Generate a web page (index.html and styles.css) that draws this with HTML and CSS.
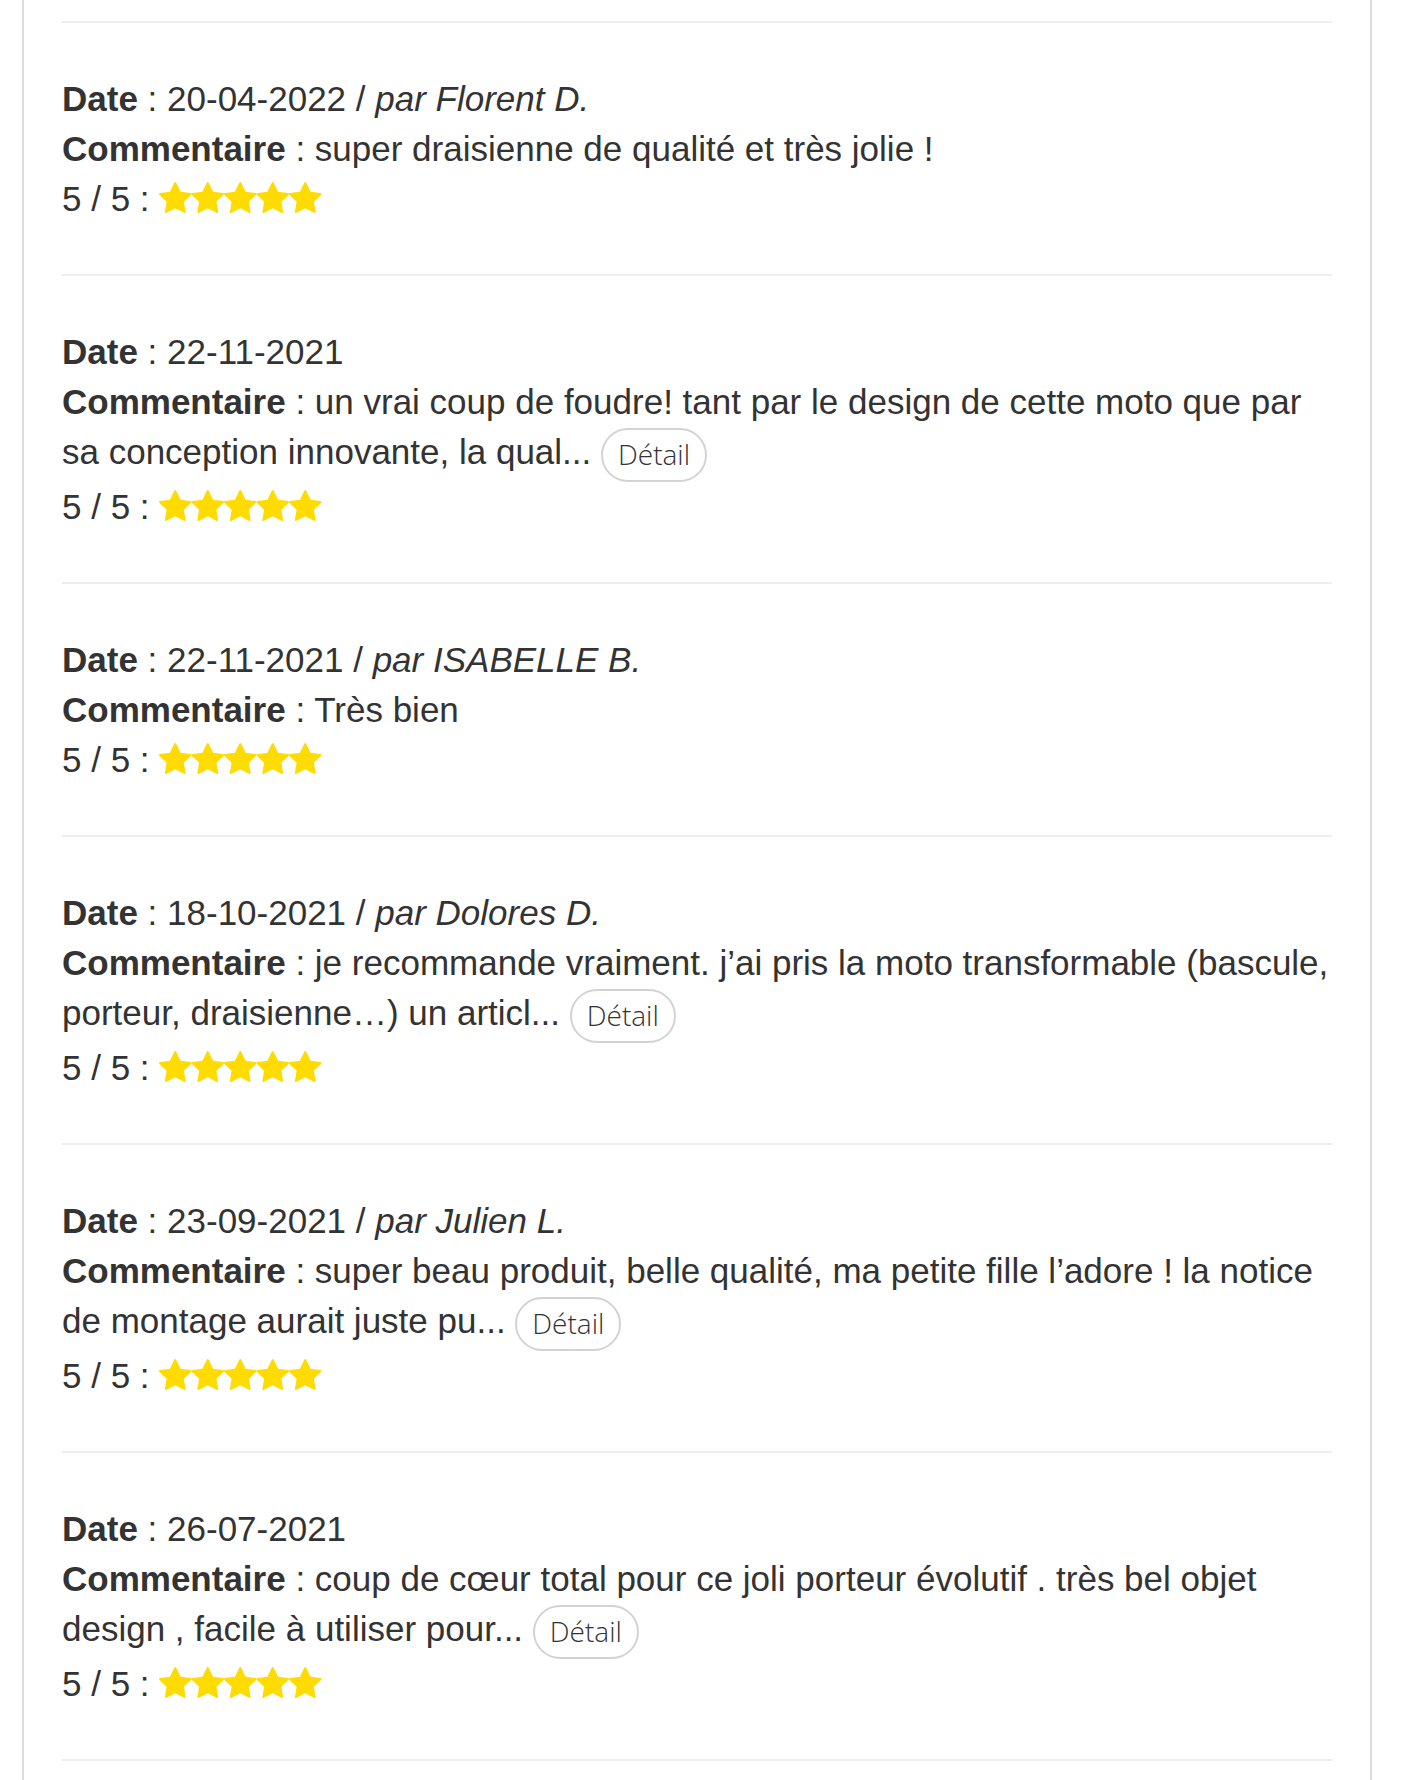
FILE: index.html
```html
<!DOCTYPE html>
<html lang="fr">
<head>
<meta charset="utf-8">
<title>Avis clients</title>
<link rel="stylesheet" href="styles.css">
</head>
<body>
<svg class="defs" width="0" height="0" aria-hidden="true">
  <defs>
    <path id="star" d="M1728 647q0 22-26 48l-363 354 86 500q1 7 1 20 0 21-10.5 35.5t-30.5 14.5q-19 0-40-12l-449-236-449 236q-21 12-40 12-21 0-31.5-14.5t-10.5-35.5q0-6 2-20l86-500-364-354q-25-27-25-48 0-37 56-46l502-73 225-455q19-41 49-41t49 41l225 455 502 73q56 9 56 46z"/>
  </defs>
</svg>
<div class="panel">
  <div class="reviews">
    <div class="review">
      <div class="line"><b>Date</b> : 20-04-2022 / <i>par Florent D.</i></div>
      <div class="line"><b>Commentaire</b> : super draisienne de qualité et très jolie !</div>
      <div class="line">5 / 5 : <svg class="stars" viewBox="64 32 8320 1587"><use href="#star"/><use href="#star" x="1664"/><use href="#star" x="3328"/><use href="#star" x="4992"/><use href="#star" x="6656"/></svg></div>
    </div>
    <div class="review">
      <div class="line"><b>Date</b> : 22-11-2021</div>
      <div class="line"><b>Commentaire</b> : un vrai coup de foudre! tant par le design de cette moto que par sa conception innovante, la qual... <button class="detail" type="button">Détail</button></div>
      <div class="line">5 / 5 : <svg class="stars" viewBox="64 32 8320 1587"><use href="#star"/><use href="#star" x="1664"/><use href="#star" x="3328"/><use href="#star" x="4992"/><use href="#star" x="6656"/></svg></div>
    </div>
    <div class="review">
      <div class="line"><b>Date</b> : 22-11-2021 / <i>par ISABELLE B.</i></div>
      <div class="line"><b>Commentaire</b> : Très bien</div>
      <div class="line">5 / 5 : <svg class="stars" viewBox="64 32 8320 1587"><use href="#star"/><use href="#star" x="1664"/><use href="#star" x="3328"/><use href="#star" x="4992"/><use href="#star" x="6656"/></svg></div>
    </div>
    <div class="review">
      <div class="line"><b>Date</b> : 18-10-2021 / <i>par Dolores D.</i></div>
      <div class="line"><b>Commentaire</b> : je recommande vraiment. j’ai pris la moto transformable (bascule, porteur, draisienne…) un articl... <button class="detail" type="button">Détail</button></div>
      <div class="line">5 / 5 : <svg class="stars" viewBox="64 32 8320 1587"><use href="#star"/><use href="#star" x="1664"/><use href="#star" x="3328"/><use href="#star" x="4992"/><use href="#star" x="6656"/></svg></div>
    </div>
    <div class="review">
      <div class="line"><b>Date</b> : 23-09-2021 / <i>par Julien L.</i></div>
      <div class="line"><b>Commentaire</b> : super beau produit, belle qualité, ma petite fille l’adore ! la notice de montage aurait juste pu... <button class="detail" type="button">Détail</button></div>
      <div class="line">5 / 5 : <svg class="stars" viewBox="64 32 8320 1587"><use href="#star"/><use href="#star" x="1664"/><use href="#star" x="3328"/><use href="#star" x="4992"/><use href="#star" x="6656"/></svg></div>
    </div>
    <div class="review">
      <div class="line"><b>Date</b> : 26-07-2021</div>
      <div class="line"><b>Commentaire</b> : coup de cœur total pour ce joli porteur évolutif . très bel objet design , facile à utiliser pour... <button class="detail" type="button">Détail</button></div>
      <div class="line">5 / 5 : <svg class="stars" viewBox="64 32 8320 1587"><use href="#star"/><use href="#star" x="1664"/><use href="#star" x="3328"/><use href="#star" x="4992"/><use href="#star" x="6656"/></svg></div>
    </div>
  </div>
</div>
</body>
</html>
```
FILE: styles.css
```css
html, body {
  margin: 0;
  padding: 0;
  background: #ffffff;
}

body {
  font-family: "Liberation Sans", Arial, Helvetica, sans-serif;
  font-size: 35px;
  line-height: 50px;
  color: #333333;
}

.defs {
  position: absolute;
  width: 0;
  height: 0;
  overflow: hidden;
}

.panel {
  box-sizing: border-box;
  width: 1350px;
  margin-left: 22px;
  border-left: 2px solid #dddddd;
  border-right: 2px solid #dddddd;
  padding: 21px 38px 60px;
}

.reviews {
  border-bottom: 2px solid #eeeeee;
}

.review {
  border-top: 2px solid #eeeeee;
  padding: 51px 0 50px;
}

.line b {
  font-weight: bold;
}

.line i {
  font-style: italic;
}

.stars {
  display: inline-block;
  width: 162.5px;
  height: 31px;
  vertical-align: -2px;
  fill: #ffdb00;
}

.detail {
  box-sizing: border-box;
  height: 54px;
  margin-left: 0;
  padding: 4px 15px 6px;
  border: 2px solid #d3d3d3;
  border-radius: 27px;
  background: #ffffff;
  color: #333333;
  font-family: "Open Sans", "Noto Sans", sans-serif;
  font-weight: 300;
  font-size: 28px;
  line-height: 40px;
  vertical-align: -1px;
  cursor: pointer;
}
```
